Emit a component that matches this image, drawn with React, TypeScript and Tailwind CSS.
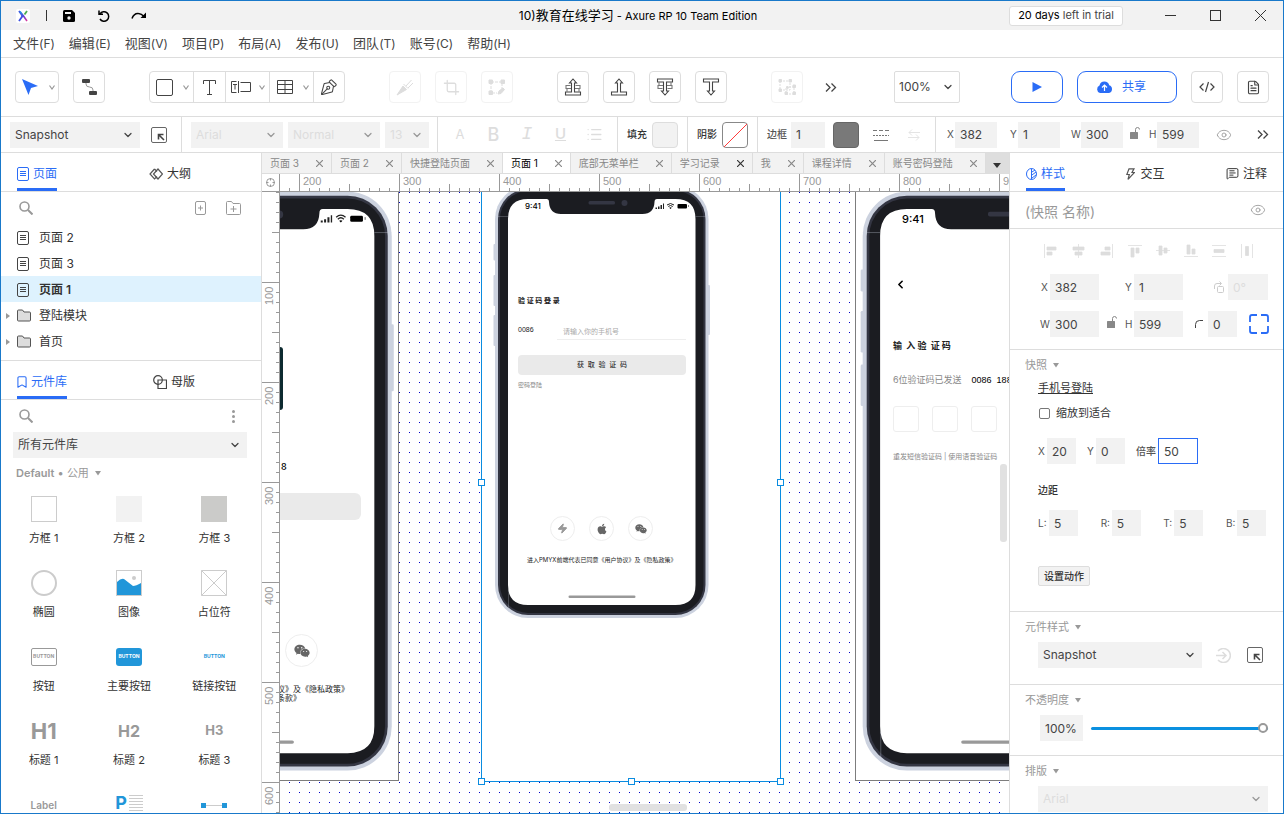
import React, { useState } from 'react';
import { Bookmark, ChevronDown, ChevronLeft, Crop, Eye, FileText, List, MessageSquareText, PenTool, Zap } from 'lucide-react';
import { FaApple, FaWeixin } from 'react-icons/fa';

const menus = [
  { name: '文件', shortcut: '(F)' },
  { name: '编辑', shortcut: '(E)' },
  { name: '视图', shortcut: '(V)' },
  { name: '项目', shortcut: '(P)' },
  { name: '布局', shortcut: '(A)' },
  { name: '发布', shortcut: '(U)' },
  { name: '团队', shortcut: '(T)' },
  { name: '账号', shortcut: '(C)' },
  { name: '帮助', shortcut: '(H)' },
];

const docTabs = ['页面 3', '页面 2', '快捷登陆页面', '页面 1', '底部无菜单栏', '学习记录', '我', '课程详情', '账号密码登陆'];

const pages = [
  { name: '页面 2', folder: false },
  { name: '页面 3', folder: false },
  { name: '页面 1', folder: false },
  { name: '登陆模块', folder: true },
  { name: '首页', folder: true },
];

/* ---------- small icons ---------- */

const PageIcon = ({ className = '' }: { className?: string }) => (
  <svg className={className} width="12" height="14" viewBox="0 0 12 14" fill="none" stroke="currentColor">
    <rect x="0.5" y="0.5" width="11" height="13" rx="1.5" />
    <path d="M3 4.5h6M3 6.5h6M3 8.5h6" />
  </svg>
);

const FolderIcon = () => (
  <svg width="14" height="13" viewBox="0 0 14 13" fill="#ddd" stroke="#555">
    <path d="M1.5 1h4l1.5 2h5.5q1 0 1 1v7q0 1-1 1h-11q-1 0-1-1v-9q0-1 1-1z" />
  </svg>
);

const Caret = ({ className = '' }: { className?: string }) => (
  <svg className={className} width="6" height="5" viewBox="0 0 6 5" fill="currentColor">
    <path d="M0 0h6l-3 4.5z" />
  </svg>
);

const SearchIcon = () => (
  <svg width="14" height="14" viewBox="0 0 14 14" fill="none" stroke="#999" strokeWidth="1.600">
    <circle cx="5.500" cy="5.500" r="4.500" />
    <path d="M9 9l4.500 4.500" strokeWidth="2" />
  </svg>
);

const MoreIcon = () => (
  <svg width="12" height="9" viewBox="0 0 12 9" fill="none" stroke="#444" strokeWidth="1.300">
    <path d="M1 0.500l4 4-4 4M6.500 0.500l4 4-4 4" />
  </svg>
);

const CornerIcon = () => (
  <svg width="16" height="16" viewBox="0 0 16 16" fill="none" stroke="#666">
    <rect x="0.5" y="0.5" width="15" height="15" rx="1.5" />
    <path d="M13 13L8 8M7.500 12.500v-5h5" stroke="#444" strokeWidth="1.600" />
  </svg>
);

const LockIcon = () => (
  <svg width="10" height="12" viewBox="0 0 10 12" fill="none">
    <rect x="0" y="5" width="8" height="7" rx="0.5" fill="#888" />
    <path d="M5.500 5V2.500q0-2 2-2t2 2" stroke="#888" />
  </svg>
);

const EyeIcon = () => <Eye className="text-[#999]" size={16} strokeWidth={1.3} />;

const CodeIcon = () => (
  <svg width="16" height="12" viewBox="0 0 16 12" fill="none" stroke="#444" strokeWidth="1.200">
    <path d="M4.500 2.500L1 6l3.500 3.500M11.500 2.500L15 6l-3.500 3.500M9.500 1l-3 10" />
  </svg>
);

const SplitIcon = () => (
  <svg width="20" height="12" viewBox="0 0 20 12" fill="none" stroke="#444">
    <path d="M5.500 0.500h-5v11h5M7.500 0v12M9.500 1.500h10v9h-10M2 3.500h4M4 3.500v5" />
  </svg>
);

const TableIcon = () => (
  <svg width="16" height="14" viewBox="0 0 16 14" fill="none" stroke="#444">
    <path d="M0.500 0.500h15v13h-15zM0.500 4.500h15M0.500 9.500h15M8 0.500v13" />
  </svg>
);

const ForwardIcon = ({ down = false, stacked = false }: { down?: boolean; stacked?: boolean }) => (
  <svg className={down ? 'rotate-180' : ''} width="18" height="18" viewBox="0 0 18 18" fill="none" stroke="#444" strokeWidth="1.100">
    {stacked && <path d="M6.500 7.500H2v3h5M11.500 7.500H16v3h-5M3 10.500v3M15 10.500v3" stroke="#777" />}
    <path d="M7.500 14V5H5.500L9 1l3.500 4h-2v9H16.500v3H1.500v-3z" fill="white" />
  </svg>
);

const NodesIcon = () => (
  <svg width="20" height="18" viewBox="0 0 20 18" fill="#ddd" stroke="#ddd">
    <path d="M3 3h10v9H3zM9 9h8v7H9z" fill="none" strokeDasharray="2 1" />
    <path d="M2 1.500h2.500V4H2zM12 1.500h2.500V4H12zM2 11h2.500v2.500H2zM16 7h2.500v2.500H16zM8 14h2.500v2.500H8zM16 14h2.500v2.500H16z" />
    <circle cx="10.500" cy="9.500" r="1" />
  </svg>
);

const alignPaths = [
  'M0.500 0v14M3 3h9v3H3zM3 8h5v3H3z',
  'M6.500 0v14M1 3h11v3H1zM3 8h7v3H3z',
  'M12.500 0v14M1 8h9v3H1zM5 3h5v3H5z',
  'M0 1.500h14M3 4h3v9H3zM8 4h3v5H8z',
  'M0 6.500h14M3 2h3v9H3zM8 4h3v5H8z',
  'M0 12.500h14M3 1h3v9H3zM8 5h3v5H8z',
  'M0 1.500h14M0 12.500h14M2 5.500h10v3H2z',
  'M1.500 0v14M12.500 0v14M5.500 2.500h3v9h-3z',
];

/* ---------- form pieces ---------- */

interface SelectProps {
  label: string;
  value: string;
  className: string;
  disabled?: boolean;
}

const Select = ({ label, value, className, disabled }: SelectProps) => (
  <div className={`relative h-[26px] bg-[#f2f2f2] ${className}`}>
    <select
      aria-label={label}
      disabled={disabled}
      className={`h-full w-full appearance-none bg-transparent px-[5px] outline-none ${disabled ? 'text-[#ddd]' : 'text-[#444]'}`}
    >
      <option>{value}</option>
    </select>
    <ChevronDown
      className={`pointer-events-none absolute top-[7px] right-1.5 ${disabled ? 'text-[#999]' : 'text-[#444]'}`}
      size={12}
      strokeWidth={2.5}
    />
  </div>
);

interface FieldProps {
  id: string;
  label: React.ReactNode;
  value: string;
  className: string;
  labelClass?: string;
  disabled?: boolean;
}

const Field = ({ id, label, value, className, labelClass = 'w-3', disabled }: FieldProps) => (
  <div className="flex items-center">
    <label htmlFor={id} className={`shrink-0 text-[10px] whitespace-nowrap text-[#555] ${labelClass}`}>
      {label}
    </label>
    <input
      id={id}
      defaultValue={value}
      disabled={disabled}
      className={`h-[26px] px-[5px] outline-none ${disabled ? 'text-[#ddd]' : 'text-[#444]'} ${className}`}
    />
  </div>
);

const SectionTitle = ({ children }: { children: React.ReactNode }) => (
  <button className="flex h-4 items-center gap-1.5 pl-[15px] text-[11px] text-[#999]">
    {children}
    <Caret />
  </button>
);

/* ---------- top bars ---------- */

const TitleBar = () => (
  <header className="grid h-[29px] shrink-0 grid-cols-[1fr_auto_1fr] items-center bg-[#f2f2f2] text-black">
    <div className="flex items-center pl-[15px]">
      <svg width="14" height="14" viewBox="0 0 14 14" fill="none">
        <defs>
          <linearGradient id="logo" x1="0" y1="0" x2="1" y2="1">
            <stop offset="0" stopColor="#1aa3e8" />
            <stop offset="0.5" stopColor="#5b3fd6" />
            <stop offset="1" stopColor="#e0359a" />
          </linearGradient>
        </defs>
        <rect width="14" height="14" rx="2" fill="white" />
        <path d="M3 2l2.500 3.500q1.500 1.500 0 3L3 12" stroke="#3f51e0" strokeWidth="1.800" />
        <path d="M11 2L8.500 5.500" stroke="#4caf50" strokeWidth="1.800" />
        <path d="M4 2.500l3.500 4.500L11 12" stroke="url(#logo)" strokeWidth="1.600" />
      </svg>
      <span className="ml-4 h-[11px] w-px bg-[#333]" />
      <button aria-label="保存" className="ml-4">
        <svg width="12" height="12" viewBox="0 0 12 12">
          <path d="M1.500 0H9l3 3v7.500q0 1.500-1.500 1.500h-9Q0 12 0 10.500v-9Q0 0 1.500 0z" />
          <path d="M2 2h6v2H2z" fill="#f2f2f2" />
          <circle cx="6" cy="8" r="1.700" fill="#f2f2f2" />
        </svg>
      </button>
      <button aria-label="撤销" className="ml-[23px]">
        <svg width="12" height="12" viewBox="0 0 12 12" fill="none" stroke="black" strokeWidth="1.500">
          <path d="M2 4a4.700 4.700 0 1 1 0 5M1 0.500V4.200h4" />
        </svg>
      </button>
      <button aria-label="重做" className="ml-[21px]">
        <svg width="16" height="9" viewBox="0 0 16 9" fill="none" stroke="black" strokeWidth="1.500">
          <path d="M1 7.500Q3 2 7.500 2.500q3 .2 5.500 3" />
          <path d="M15 1.500V7H9.500z" fill="black" stroke="none" />
        </svg>
      </button>
    </div>
    <h1 className="pr-2 text-[11px] whitespace-nowrap">
      <span className="text-[12px]">10)</span>
      <span className="text-[13px]">教育在线学习</span> - Axure RP 10 Team Edition
    </h1>
    <div className="flex items-center justify-end pr-[17px]">
      <button className="mr-[42px] h-5 w-[114px] rounded-[3px] border border-[#ddd] bg-white text-[11px] whitespace-nowrap text-[#444]">
        <span className="text-black">20 days</span> left in trial
      </button>
      <div className="flex gap-[34px]">
        <button aria-label="最小化" className="flex size-[11px] items-center">
          <span className="h-px w-full bg-[#333]" />
        </button>
        <button aria-label="最大化" className="size-[11px] border border-[#333]" />
        <button aria-label="关闭">
          <svg width="11" height="11" viewBox="0 0 11 11" stroke="#333">
            <path d="M0 0l11 11M11 0L0 11" />
          </svg>
        </button>
      </div>
    </div>
  </header>
);

const SmallChevron = () => (
  <svg width="6" height="5" viewBox="0 0 6 5" fill="none" stroke="#999" strokeWidth="1.200">
    <path d="M0.500 0.500L3 4l2.500-3.500" />
  </svg>
);

const ToolButton = ({ label, faded, children }: { label: string; faded?: boolean; children: React.ReactNode }) => (
  <button
    aria-label={label}
    className={`flex size-8 items-center justify-center rounded-[4px] border text-[#444] ${faded ? 'border-[#f2f2f2]' : 'border-[#ddd]'}`}
  >
    {children}
  </button>
);

const Toolbar = () => (
  <div className="flex h-[59px] shrink-0 items-center border-b border-[#ddd] px-3.5">
    <div className="flex gap-3.5">
      <button aria-label="选择" className="flex h-8 w-11 items-center justify-between rounded-[4px] border border-[#ddd] pr-[3px] pl-1.5">
        <svg width="16" height="16" viewBox="0 0 16 16" fill="#2a6cf6">
          <path d="M0 0l16 7-7 2-2.500 7z" />
        </svg>
        <SmallChevron />
      </button>
      <ToolButton label="连接">
        <svg width="15" height="16" viewBox="0 0 15 16" fill="none">
          <path d="M4 2v3q0 3 3.500 3T11 11v3" stroke="#999" />
          <rect width="8" height="4" rx="1" fill="#444" />
          <rect x="7" y="12" width="8" height="4" rx="1" fill="#444" />
        </svg>
      </ToolButton>
    </div>
    <div className="ml-11 flex h-8 divide-x divide-[#ddd] rounded-[4px] border border-[#ddd]">
      <button aria-label="矩形" className="flex w-11 items-center justify-between pr-1 pl-1.5">
        <svg width="17" height="17" viewBox="0 0 17 17" fill="none" stroke="#444">
          <rect x="0.500" y="0.500" width="16" height="16" rx="1.500" />
        </svg>
        <SmallChevron />
      </button>
      <button aria-label="文本" className="flex w-8 items-center justify-center">
        <svg width="13" height="15" viewBox="0 0 13 15" fill="none" stroke="#444">
          <path d="M0.500 4V0.500h12V4M6.500 0.500v14M4 14.500h5" />
        </svg>
      </button>
      <button aria-label="表单" className="flex w-11 items-center justify-between pr-1 pl-[5px]">
        <SplitIcon />
        <SmallChevron />
      </button>
      <button aria-label="表格" className="flex w-11 items-center justify-between pr-1 pl-[7px]">
        <TableIcon />
        <SmallChevron />
      </button>
      <button aria-label="钢笔" className="flex w-[30px] items-center justify-center">
        <PenTool className="-scale-y-100 text-[#444]" size={18} strokeWidth={1.4} />
      </button>
    </div>
    <div className="ml-11 flex gap-3.5">
      <ToolButton label="切割" faded>
        <svg width="18" height="18" viewBox="0 0 18 18" fill="#ddd" stroke="#ddd">
          <path d="M1 17l6-9 3.500 3.500zM7.500 6l4.500 4.500M10 8l5.500-6M12 10l5-5" />
        </svg>
      </ToolButton>
      <ToolButton label="裁剪" faded>
        <Crop className="text-[#ddd]" size={17} strokeWidth={1.8} />
      </ToolButton>
      <ToolButton label="编辑点" faded>
        <svg width="18" height="17" viewBox="0 0 18 17" fill="#ddd" stroke="#ddd">
          <path d="M3 3h11v8M3 3v11h6" fill="none" strokeDasharray="3 1" />
          <path d="M1 1h3.500v3.500H1zM13 1h3.500v3.500H13zM1 12h3.500v3.500H1zM10 15l1-3 4-3 1.500 1.500-3.500 4z" />
        </svg>
      </ToolButton>
    </div>
    <div className="ml-11 flex gap-3.5">
      <ToolButton label="置于顶层">
        <ForwardIcon stacked />
      </ToolButton>
      <ToolButton label="上移一层">
        <ForwardIcon />
      </ToolButton>
      <ToolButton label="置于底层">
        <ForwardIcon down stacked />
      </ToolButton>
      <ToolButton label="下移一层">
        <ForwardIcon down />
      </ToolButton>
    </div>
    <div className="ml-11 flex items-center gap-[22px]">
      <ToolButton label="组合" faded>
        <NodesIcon />
      </ToolButton>
      <button aria-label="更多">
        <MoreIcon />
      </button>
    </div>
    <div className="ml-auto flex items-center gap-3.5">
      <div className="relative mr-[37px] h-8 w-[66px] rounded-[2px] border border-[#ddd]">
        <select aria-label="缩放" className="h-full w-full appearance-none px-1 text-[12px] text-[#444] outline-none">
          <option>100%</option>
        </select>
        <ChevronDown className="pointer-events-none absolute top-[9px] right-[5px] text-[#444]" size={12} strokeWidth={2.5} />
      </div>
      <button aria-label="预览" className="flex h-8 w-[52px] items-center justify-center rounded-[9px] border border-[#2a6cf6]">
        <svg width="10" height="10" viewBox="0 0 10 10" fill="#2a6cf6">
          <path d="M0.500 0L10 5l-9.500 5z" />
        </svg>
      </button>
      <button className="flex h-8 w-[100px] items-center justify-center gap-[9px] rounded-[9px] border border-[#2a6cf6] pr-3 text-[#2a6cf6]">
        <svg width="17" height="12" viewBox="0 0 17 12" fill="#2a6cf6">
          <path d="M4 12a4 4 0 0 1-.5-7.500 5 5 0 0 1 9.700-.2A4 4 0 0 1 13 12z" />
          <path d="M8.500 10V4.500M6 6.500l2.500-2.500L11 6.500" stroke="white" strokeWidth="1.200" fill="none" />
        </svg>
        共享
      </button>
      <ToolButton label="代码">
        <CodeIcon />
      </ToolButton>
      <ToolButton label="说明">
        <FileText size={15} strokeWidth={1.8} />
      </ToolButton>
    </div>
  </div>
);

const PropertyBar = () => (
  <div className="flex h-9 shrink-0 divide-x divide-[#ddd] border-b border-[#ddd]">
    <div className="flex items-center gap-[11px] pr-3.5 pl-[9px]">
      <Select label="样式" value="Snapshot" className="w-[130px]" />
      <button aria-label="编辑样式">
        <CornerIcon />
      </button>
    </div>
    <div className="flex items-center gap-[5px] pr-2 pl-[9px]">
      <Select label="字体" value="Arial" className="w-[92px]" disabled />
      <Select label="字重" value="Normal" className="w-[92px]" disabled />
      <Select label="字号" value="13" className="w-11" disabled />
    </div>
    <div className="flex w-[180px] items-center justify-between px-3.5 text-[#ddd]">
      <button className="w-4 text-[13px]">A</button>
      <button className="w-4 text-[18px] font-medium">B</button>
      <button className="w-4 font-['Liberation_Mono'] text-[18px] italic">I</button>
      <button className="w-4 text-[15px] font-medium underline">U</button>
      <button aria-label="列表">
        <List size={17} strokeWidth={1.8} />
      </button>
    </div>
    <div className="flex items-center gap-[5px] pr-[9px] pl-[9px] text-[10px] font-medium">
      填充
      <button aria-label="填充颜色" className="size-[26px] rounded-[4px] border border-[#ddd] bg-[#f2f2f2]" />
    </div>
    <div className="flex items-center gap-[5px] pr-[9px] pl-[9px] text-[10px] font-medium">
      阴影
      <button aria-label="阴影颜色">
        <svg width="26" height="26" viewBox="0 0 26 26" fill="none">
          <rect x="0.500" y="0.500" width="25" height="25" rx="3.500" stroke="#888" />
          <path d="M2 25L25 2" stroke="#ff3b3b" />
        </svg>
      </button>
    </div>
    <div className="flex items-center pr-[15px] pl-[9px]">
      <Field id="border-width" label="边框" value="1" className="w-[34px] bg-[#f2f2f2]" labelClass="w-6 font-medium" />
      <button aria-label="边框颜色" className="ml-2 size-[26px] rounded-[4px] border border-[#666] bg-[#797979]" />
      <button aria-label="线型" className="ml-3.5">
        <svg width="16" height="12" viewBox="0 0 16 12" fill="none" stroke="#777">
          <path d="M0 1.500h16" strokeDasharray="4 2" />
          <path d="M0 6.500h16" strokeDasharray="2 1" />
          <path d="M1 11.500h14" />
        </svg>
      </button>
      <button aria-label="箭头" className="ml-[19px]">
        <svg width="12" height="12" viewBox="0 0 12 12" fill="none" stroke="#e4e4e4">
          <path d="M12 3.500H1M4 0.500l-3 3 3 3M0 8.500h11M8 5.500l3 3-3 3" />
        </svg>
      </button>
    </div>
    <div className="flex flex-1 items-center pr-3.5 pl-[11px]">
      <Field id="bar-x" label="X" value="382" className="w-[42px] bg-[#f2f2f2]" labelClass="w-2" />
      <div className="ml-[13px]">
        <Field id="bar-y" label="Y" value="1" className="w-[42px] bg-[#f2f2f2]" labelClass="w-2" />
      </div>
      <div className="ml-[11px]">
        <Field id="bar-w" label="W" value="300" className="w-[42px] bg-[#f2f2f2]" labelClass="w-2.5" />
      </div>
      <button aria-label="锁定比例" className="ml-[7px] pb-1">
        <LockIcon />
      </button>
      <div className="ml-[9px]">
        <Field id="bar-h" label="H" value="599" className="w-[42px] bg-[#f2f2f2]" labelClass="w-2" />
      </div>
      <button aria-label="隐藏" className="ml-[17px]">
        <EyeIcon />
      </button>
      <button aria-label="更多属性" className="ml-auto">
        <MoreIcon />
      </button>
    </div>
  </div>
);

/* ---------- left side ---------- */

const PagesPanel = () => {
  const [current, setCurrent] = useState('页面 1');

  return (
    <section className="flex h-[208px] shrink-0 flex-col border-b border-[#ddd]">
      <div className="flex h-[39px] shrink-0 border-b border-[#ddd] pl-4">
        <button className="flex items-center gap-1 border-b-[3px] border-[#2a6cf6] pt-1.5 text-[#2a6cf6]">
          <PageIcon />
          页面
        </button>
        <button className="ml-[92px] flex items-center gap-1 pt-[3px]">
          <svg width="14" height="12" viewBox="0 0 14 12" fill="none" stroke="#555" strokeWidth="1.200">
            <path d="M5.500 1L1 6l4.500 5L8 8.500M5.500 1L8 3.500M9 1L4.500 6 9 11l4.500-5z" />
          </svg>
          大纲
        </button>
      </div>
      <div className="flex h-8 items-center pr-5 pl-[18px]">
        <SearchIcon />
        <button aria-label="添加页面" className="ml-auto">
          <svg width="11" height="14" viewBox="0 0 11 14" fill="none" stroke="#999">
            <rect x="0.500" y="0.500" width="10" height="13" rx="1.500" />
            <path d="M5.500 4.500v5M3 7h5" />
          </svg>
        </button>
        <button aria-label="添加文件夹" className="ml-5">
          <svg width="15" height="14" viewBox="0 0 15 14" fill="none" stroke="#999">
            <path d="M1.500 0.500h4l1.500 2h6.500q1 0 1 1v9q0 1-1 1h-12q-1 0-1-1v-11q0-1 1-1zM7.500 5v6M4.500 8h6" />
          </svg>
        </button>
      </div>
      <ul>
        {pages.map((page) => (
          <li key={page.name}>
            <button
              onClick={() => setCurrent(page.name)}
              className={`flex h-[26px] w-full items-center pt-px ${page.name === current ? 'bg-[#def2fe] font-semibold' : ''}`}
            >
              <span className="flex w-4 items-center pl-[5px] text-[#999]">
                {page.folder && (
                  <svg width="4" height="6" viewBox="0 0 4 6" fill="currentColor">
                    <path d="M0 0v6l4-3z" />
                  </svg>
                )}
              </span>
              <span className="w-[22px] text-[#444]">{page.folder ? <FolderIcon /> : <PageIcon />}</span>
              {page.name}
            </button>
          </li>
        ))}
      </ul>
    </section>
  );
};

const libraryItems = [
  { id: 'box-1', name: '方框 1', icon: <span className="size-[26px] border border-[#ccc]" /> },
  { id: 'box-2', name: '方框 2', icon: <span className="size-[26px] bg-[#f2f2f2]" /> },
  { id: 'box-3', name: '方框 3', icon: <span className="size-[26px] bg-[#cbcbc9]" /> },
  { id: 'ellipse', name: '椭圆', icon: <span className="size-[26px] rounded-full border-2 border-[#ccc]" /> },
  {
    id: 'image',
    name: '图像',
    icon: (
      <svg width="26" height="26" viewBox="0 0 26 26">
        <rect x="0.500" y="0.500" width="25" height="25" fill="white" stroke="#ccc" />
        <path d="M1 12q4-4 7-3l9 7q3 0 8-3v12H1z" fill="#2196d9" />
        <circle cx="18" cy="8" r="2" fill="#ccc" />
      </svg>
    ),
  },
  {
    id: 'placeholder',
    name: '占位符',
    icon: (
      <svg width="26" height="26" viewBox="0 0 26 26" fill="none" stroke="#ccc">
        <path d="M0.500 0.500h25v25h-25zM0.500 0.500l25 25M25.500 0.500l-25 25" />
      </svg>
    ),
  },
  {
    id: 'button',
    name: '按钮',
    icon: (
      <span className="flex h-[18px] w-[26px] items-center justify-center rounded-[2px] border border-[#999] text-[5px] font-bold text-[#999]">
        BUTTON
      </span>
    ),
  },
  {
    id: 'primary-button',
    name: '主要按钮',
    icon: (
      <span className="flex h-[18px] w-[26px] items-center justify-center rounded-[3px] bg-[#2196d9] text-[5px] font-bold text-white">
        BUTTON
      </span>
    ),
  },
  { id: 'link-button', name: '链接按钮', icon: <span className="text-[5px] font-bold text-[#2196d9]">BUTTON</span> },
  { id: 'h1', name: '标题 1', icon: <span className="text-[22px] font-bold text-[#999]">H1</span> },
  { id: 'h2', name: '标题 2', icon: <span className="text-[16px] font-bold text-[#999]">H2</span> },
  { id: 'h3', name: '标题 3', icon: <span className="text-[13px] font-bold text-[#999]">H3</span> },
  { id: 'label', icon: <span className="text-[10px] font-semibold text-[#999]">Label</span> },
  {
    id: 'paragraph',
    icon: (
      <span className="flex items-start gap-0.5 pb-1 leading-4">
        <b className="text-[18px] text-[#2196d9]">P</b>
        <svg width="14" height="16" viewBox="0 0 14 16" stroke="#ccc">
          <path d="M0 0.500h14M0 3.500h14M0 6.500h14M0 9.500h14M0 12.500h14M0 15.500h14" />
        </svg>
      </span>
    ),
  },
  {
    id: 'line',
    icon: (
      <svg width="26" height="5" viewBox="0 0 26 5" fill="#2196d9">
        <path d="M0 2.500h26" stroke="#ccc" />
        <path d="M0 0h5v5H0zM21 0h5v5h-5z" />
      </svg>
    ),
  },
];

const LibraryPanel = () => (
  <section className="flex min-h-0 flex-1 flex-col overflow-hidden">
    <div className="flex h-[39px] shrink-0 border-b border-[#ddd] pl-4">
      <button className="flex items-center gap-0.5 border-b-[3px] border-[#2a6cf6] pt-1.5 text-[#2a6cf6]">
        <Bookmark size={14} strokeWidth={1.8} className="-ml-0.5" />
        元件库
      </button>
      <button className="ml-[86px] flex items-center gap-1 pt-[3px]">
        <svg width="14" height="14" viewBox="0 0 14 14" fill="none" stroke="#444" strokeWidth="1.200">
          <circle cx="5" cy="5" r="4.300" />
          <path d="M5 5h8.500v8.500H5z" />
        </svg>
        母版
      </button>
    </div>
    <div className="flex h-8 shrink-0 items-center justify-between pr-[26px] pl-[18px]">
      <SearchIcon />
      <button aria-label="元件库选项">
        <svg width="3" height="13" viewBox="0 0 3 13" fill="#999">
          <circle cx="1.500" cy="1.500" r="1.500" />
          <circle cx="1.500" cy="6.500" r="1.500" />
          <circle cx="1.500" cy="11.500" r="1.500" />
        </svg>
      </button>
    </div>
    <Select label="元件库" value="所有元件库" className="mr-3.5 ml-3 shrink-0" />
    <button className="mt-[7px] flex h-4 shrink-0 items-center gap-1.5 pl-[15px] text-[11px] text-[#999]">
      <span>
        <b className="font-semibold">Default</b> • 公用
      </span>
      <Caret />
    </button>
    <ul className="mt-[15px] grid shrink-0 grid-cols-3 gap-y-6 pr-1">
      {libraryItems.map((item) => (
        <li key={item.id} className="flex flex-col items-center gap-2">
          <span className="flex h-[26px] items-center justify-center">{item.icon}</span>
          {item.name && <span className="text-[11px] leading-4">{item.name}</span>}
        </li>
      ))}
    </ul>
  </section>
);

/* ---------- canvas ---------- */

const makeTicks = (count: number) => Array.from({ length: count }, (_, i) => i * 10);

const tickSize = (v: number) => (v % 100 === 0 ? 17 : v % 50 === 0 ? 7 : 3);

const HorizontalRuler = () => (
  <svg className="h-full min-w-0 flex-1 font-['Liberation_Sans']" fill="#999">
    {makeTicks(100).map((v) => (
      <g key={v}>
        <rect x={v - 181} y={17 - tickSize(v)} width="1" height={tickSize(v)} />
        {v >= 200 && v % 100 === 0 && (
          <text x={v - 177} y="11" fontSize="11">
            {v}
          </text>
        )}
      </g>
    ))}
  </svg>
);

const VerticalRuler = () => (
  <svg className="h-full w-[18px] shrink-0 border-r border-[#999] font-['Liberation_Sans']" fill="#999">
    {makeTicks(70).map((v) => (
      <g key={v}>
        <rect x={17 - tickSize(v)} y={v - 10} width={tickSize(v)} height="1" />
        {v > 0 && v % 100 === 0 && (
          <text transform={`translate(11 ${v + 13}) rotate(-90)`} fontSize="11">
            {v}
          </text>
        )}
      </g>
    ))}
  </svg>
);

// drawn in 375x812 device units, with 30 units of room for the bezel
const Phone = ({ scale, className }: { scale: number; className: string }) => (
  <svg className={`absolute ${className}`} width={435 * scale} height={872 * scale} viewBox="-30 -30 435 872">
    <g fill="#ccd2df">
      <rect x="-29" y="90" width="6" height="33" rx="2" />
      <rect x="-29" y="152" width="6" height="62" rx="2" />
      <rect x="-29" y="232" width="6" height="62" rx="2" />
      <rect x="398" y="172" width="6" height="100" rx="2" />
      <rect x="-26" y="-26" width="427" height="864" rx="66" />
    </g>
    <rect x="-20" y="-20" width="415" height="852" rx="60" fill="#343643" />
    <rect x="-16" y="-16" width="407" height="844" rx="56" fill="#1b1c21" />
    <path
      d="M40 0H77q5 0 5 6 1 24 24 24h163q23 0 24-24 0-6 5-6h37q40 0 40 40v732q0 40-40 40H40q-40 0-40-40V40Q0 0 40 0z"
      fill="white"
    />
    <path d="M-26 35H0M375 35h26M1 780v45" stroke="#ccd2df" strokeWidth="1" opacity="0.500" />
    <rect x="161" y="4" width="53" height="7" rx="3" fill="#343643" />
    <circle cx="233" cy="8" r="6" fill="#343643" />
    <g>
      <path d="M295 17h3v3h-3zM300 15h3v5h-3zM305 12h3v8h-3zM310 9h2v11h-2z" fill="#222" />
      <path d="M318 12q7-6 14 0M320.500 15q4.500-4 9 0" fill="none" stroke="#222" strokeWidth="2" />
      <path d="M322.500 17.500q2.500-2 5 0L325 20z" />
      <rect x="339" y="10" width="19" height="9" rx="2" />
      <rect x="360.500" y="12" width="1.500" height="4" fill="#666" />
    </g>
    <rect x="121" y="793" width="134" height="5" rx="2.500" fill="#999" />
  </svg>
);

const handles = [
  'left-[198px] top-[287px]',
  'left-[497px] top-[287px]',
  'left-[198px] top-[586px]',
  'left-[348px] top-[586px]',
  'left-[497px] top-[586px]',
];

const LoginSnapshot = () => (
  <>
    <div className="absolute top-0 left-[201px] h-[590px] w-[300px] border-x border-b border-[#0a8ce0] bg-white" />
    <Phone scale={0.5} className="top-[-8px] left-[213px]" />
    <span className="absolute top-2 left-[245px] text-[8px] leading-3 font-medium text-black">9:41</span>
    <h2 className="absolute top-[103px] left-[238px] text-[7px] leading-3 font-bold text-[#222]">验 证 码 登 录</h2>
    <span className="absolute top-[132px] left-[238px] font-['Liberation_Sans'] text-[7px] leading-3 text-[#222]">0086</span>
    <span className="absolute top-[134px] left-[283px] text-[7px] leading-3 text-[#aaa]">请输入你的手机号</span>
    <span className="absolute top-[147px] left-[277px] h-px w-[129px] bg-[#eee]" />
    <span className="absolute top-[163px] left-[238px] flex h-5 w-[168px] items-center justify-center rounded-[4px] bg-[#eaeaea] text-[7px] font-medium text-[#333]">
      获&nbsp; 取&nbsp; 验&nbsp; 证&nbsp; 码
    </span>
    <span className="absolute top-[187px] left-[238px] text-[6px] leading-3 text-[#888]">密码登陆</span>
    <div className="absolute top-[324px] left-[270px] flex gap-3.5">
      <span className="flex size-[25px] items-center justify-center rounded-full border border-[#eee] text-[#999]">
        <Zap size={11} fill="currentColor" />
      </span>
      <span className="flex size-[25px] items-center justify-center rounded-full border border-[#eee] text-[#666]">
        <FaApple size={12} />
      </span>
      <span className="flex size-[25px] items-center justify-center rounded-full border border-[#eee] text-[#666]">
        <FaWeixin size={12} />
      </span>
    </div>
    <p className="absolute top-[362px] left-[247px] text-[6px] leading-3 whitespace-nowrap text-[#222]">
      进入PMYX前端代表已同意《用户协议》及《隐私政策》
    </p>
    {handles.map((pos) => (
      <span key={pos} className={`absolute size-[7px] border border-[#0a8ce0] bg-white ${pos}`} />
    ))}
  </>
);

const QuickLoginSnapshot = () => (
  <>
    <div className="absolute top-0 left-0 h-[589px] w-[119px] border-r border-b border-[#7d7d7d] bg-white" />
    <Phone scale={0.67} className="top-[-3px] left-[-177px]" />
    <span className="absolute top-[155px] left-0 h-[63px] w-[3px] rounded-r-[3px] bg-[#0d2a30]" />
    <span className="absolute top-[269px] left-[1px] text-[9px] leading-3 font-medium text-black">8</span>
    <span className="absolute top-[301px] left-0 h-[27px] w-[81px] rounded-r-[6px] bg-[#eaeaea]" />
    <span className="absolute top-[442px] left-[5px] flex size-[33px] items-center justify-center rounded-full border border-[#eee] text-[#666]">
      <FaWeixin size={16} />
    </span>
    <p className="absolute top-[493px] left-[-3px] text-[8px] leading-[9px] whitespace-nowrap text-[#222]">
      议》及《隐私政策》
      <br />
      条款》
    </p>
  </>
);

const CodeSnapshot = () => (
  <>
    <div className="absolute top-0 left-[575px] h-[589px] w-[300px] border-b border-l border-[#7d7d7d] bg-white" />
    <Phone scale={0.67} className="top-[-3px] left-[580px]" />
    <span className="absolute top-[21px] left-[622px] text-[11px] leading-3 font-medium text-black">9:41</span>
    <ChevronLeft className="absolute top-[86px] left-[614px] text-black" size={13} strokeWidth={3} />
    <h2 className="absolute top-[148px] left-[613px] text-[9px] leading-3 font-bold whitespace-nowrap text-[#222]">
      输&nbsp; 入&nbsp;验&nbsp; 证&nbsp;码
    </h2>
    <p className="absolute top-[182px] left-[613px] flex gap-2.5 text-[9px] leading-3 whitespace-nowrap text-[#888]">
      6位验证码已发送
      <span className="font-['Liberation_Sans'] text-black">0086&nbsp; 188</span>
    </p>
    <div className="absolute top-[214px] left-[613px] flex gap-[13px]">
      <span className="size-[26px] rounded-[3px] border border-[#eee]" />
      <span className="size-[26px] rounded-[3px] border border-[#eee]" />
      <span className="size-[26px] rounded-[3px] border border-[#eee]" />
    </div>
    <p className="absolute top-[259px] left-[613px] text-[7px] leading-3 whitespace-nowrap text-[#888]">重发短信验证码 | 使用语音验证码</p>
  </>
);

const Canvas = () => {
  const [active, setActive] = useState('页面 1');

  return (
    <main className="flex min-w-0 flex-1 flex-col overflow-hidden">
      <div className="flex h-[21px] shrink-0 border-b border-[#ddd] bg-[#dedede] text-[10px]">
        {docTabs.map((tab) => (
          <div
            key={tab}
            className={`flex shrink-0 items-center gap-[17px] border-r border-[#ddd] px-2 ${
              tab === active ? 'bg-white text-black' : 'bg-[#f2f2f2] text-[#888]'
            }`}
          >
            <button onClick={() => setActive(tab)} className="whitespace-nowrap">
              {tab}
            </button>
            <button aria-label={`关闭 ${tab}`} className={tab === '学习记录' ? 'text-[#333]' : 'text-[#888]'}>
              <svg width="7" height="7" viewBox="0 0 7 7" stroke="currentColor" strokeWidth="1.200">
                <path d="M0 0l7 7M7 0L0 7" />
              </svg>
            </button>
          </div>
        ))}
        <button aria-label="全部标签" className="flex flex-1 items-center justify-center pt-1 text-[#333]">
          <svg width="8" height="5" viewBox="0 0 8 5" fill="currentColor">
            <path d="M0 0h8L4 5z" />
          </svg>
        </button>
      </div>
      <div className="flex h-[18px] shrink-0 border-b border-[#999]">
        <div className="flex w-[18px] items-center justify-center border-r border-[#999]">
          <svg width="9" height="9" viewBox="0 0 9 9" fill="none" stroke="#999">
            <circle cx="4.500" cy="4.500" r="4" />
            <path d="M4.500 0v2.500M4.500 6.500V9M0 4.500h2.500M6.500 4.500H9" />
          </svg>
        </div>
        <HorizontalRuler />
      </div>
      <div className="flex min-h-0 flex-1">
        <VerticalRuler />
        <div className="relative min-w-0 flex-1 overflow-hidden bg-white">
          <svg className="absolute inset-0 h-full w-full">
            <pattern id="dots" width="10" height="10" patternUnits="userSpaceOnUse">
              <rect x="9" y="0" width="1" height="1" fill="#0000cc" />
            </pattern>
            <rect width="100%" height="100%" fill="url(#dots)" />
          </svg>
          <QuickLoginSnapshot />
          <CodeSnapshot />
          <LoginSnapshot />
          <span className="absolute top-[272px] right-[2px] h-[78px] w-[7px] rounded-[3px] bg-[#e1e1e1]" />
          <span className="absolute bottom-[2px] left-[329px] h-[7px] w-[78px] rounded-[3px] bg-[#e1e1e1]" />
        </div>
      </div>
    </main>
  );
};

/* ---------- right side ---------- */

const margins = [
  { id: 'margin-l', label: 'L:' },
  { id: 'margin-r', label: 'R:' },
  { id: 'margin-t', label: 'T:' },
  { id: 'margin-b', label: 'B:' },
];

const StylePanel = () => (
  <aside className="flex w-[274px] shrink-0 flex-col overflow-hidden border-l border-[#ddd]">
    <div className="flex h-[39px] shrink-0 justify-between border-b border-[#ddd] px-4">
      <button className="flex items-center gap-1 border-b-[3px] border-[#2a6cf6] pt-1.5 text-[#2a6cf6]">
        <svg width="11" height="12" viewBox="0 0 11 12" fill="none" stroke="#2a6cf6">
          <ellipse cx="5.500" cy="6" rx="5" ry="5.500" />
          <path d="M5.500 0.500v11M6 4l3-2M6 7l4-3M6 10l4-3" />
        </svg>
        样式
      </button>
      <button className="flex items-center gap-[5px] pt-[3px]">
        <svg width="9" height="12" viewBox="0 0 9 12" fill="none" stroke="#555" strokeWidth="1.200">
          <path d="M3 0.800h5L6 4.500h2.500L2 11.300l1.300-4.800H0.800z" />
        </svg>
        交互
      </button>
      <button className="flex items-center gap-1 pt-[3px]">
        <MessageSquareText size={13} strokeWidth={1.8} />
        注释
      </button>
    </div>

    <div className="flex h-[37px] shrink-0 items-center justify-between border-b border-[#ddd] pr-[17px] pl-[15px]">
      <input aria-label="快照名称" placeholder="(快照 名称)" className="w-40 pt-0.5 text-[14px] outline-none placeholder:text-[#999]" />
      <button aria-label="隐藏元件">
        <EyeIcon />
      </button>
    </div>

    <section className="h-[121px] shrink-0 border-b border-[#ddd] pt-[15px] pl-[27px]">
      <div className="flex gap-3.5 pl-[7px]">
        {alignPaths.map((d) => (
          <button key={d} aria-label="对齐" disabled>
            <svg width="14" height="14" viewBox="0 0 14 14" fill="#ddd" stroke="#ddd" strokeWidth="0.800">
              <path d={d} />
            </svg>
          </button>
        ))}
      </div>
      <div className="mt-4 flex h-[26px] items-center">
        <Field id="pos-x" label="X" value="382" className="w-[49px] bg-[#f2f2f2]" labelClass="w-[13px] pl-1" />
        <div className="ml-[22px]">
          <Field id="pos-y" label="Y" value="1" className="w-[49px] bg-[#f2f2f2]" labelClass="w-[13px] pl-1" />
        </div>
        <div className="ml-[31px]">
          <Field
            id="rotation"
            label={
              <svg width="10" height="12" viewBox="0 0 10 12" fill="none" stroke="#ccc">
                <rect x="3.500" y="5.500" width="6" height="6" rx="1" />
                <path d="M0.500 8V5q0-2.500 2.500-2.500h4M5.500 0.500l2 2-2 2" />
              </svg>
            }
            value="0°"
            className="w-10 bg-[#f2f2f2]"
            labelClass="w-3.5"
            disabled
          />
        </div>
      </div>
      <div className="mt-[11px] flex h-[26px] items-center">
        <Field id="size-w" label="W" value="300" className="w-[49px] bg-[#f2f2f2]" labelClass="w-[13px] pl-[3px]" />
        <button aria-label="锁定宽高比" className="ml-2 w-3.5 pb-1">
          <LockIcon />
        </button>
        <Field id="size-h" label="H" value="599" className="w-[49px] bg-[#f2f2f2]" labelClass="w-[13px] pl-1" />
        <div className="ml-3">
          <Field
            id="radius"
            label={
              <svg width="8" height="8" viewBox="0 0 8 8" fill="none" stroke="#444">
                <path d="M0.500 8V4.500q0-4 4-4H8" />
              </svg>
            }
            value="0"
            className="w-[29px] bg-[#f2f2f2]"
            labelClass="w-[13px]"
          />
        </div>
        <button aria-label="适应内容" className="ml-3">
          <svg width="20" height="20" viewBox="0 0 20 20" fill="none" stroke="#2a6cf6" strokeWidth="1.800">
            <path d="M1 8V3q0-2 2-2h5M12 1h5q2 0 2 2v5M19 12v5q0 2-2 2h-5M8 19H3q-2 0-2-2v-5" />
          </svg>
        </button>
      </div>
    </section>

    <section className="h-[262px] shrink-0 border-b border-[#ddd] pt-[7px]">
      <SectionTitle>快照</SectionTitle>
      <div className="pl-7">
        <a href="#page" className="mt-[7px] block w-fit text-[11px] leading-4 underline">
          手机号登陆
        </a>
        <label className="mt-[9px] flex h-4 items-center gap-1.5 pl-px text-[11px]">
          <input type="checkbox" className="size-[11px] appearance-none rounded-[2px] border border-[#777] bg-white" />
          缩放到适合
        </label>
        <div className="mt-[17px] flex">
          <Field id="offset-x" label="X" value="20" className="w-[29px] bg-[#f2f2f2]" labelClass="w-[9px]" />
          <div className="ml-[11px]">
            <Field id="offset-y" label="Y" value="0" className="w-[29px] bg-[#f2f2f2]" labelClass="w-[9px]" />
          </div>
          <div className="ml-[11px]">
            <Field id="zoom" label="倍率" value="50" className="w-10 border border-[#2a6cf6] bg-white" labelClass="w-[22px] font-medium" />
          </div>
        </div>
        <h3 className="mt-[18px] text-[10px] leading-4 font-medium">边距</h3>
        <div className="mt-3 flex justify-between pr-[17px]">
          {margins.map((m) => (
            <Field key={m.id} id={m.id} label={m.label} value="5" className="w-[29px] bg-[#f2f2f2]" labelClass="w-[11px]" />
          ))}
        </div>
        <button className="mt-[30px] h-5 w-[52px] rounded-[2px] border border-[#ddd] bg-[#f2f2f2] text-[10px] leading-4 font-medium">
          设置动作
        </button>
      </div>
    </section>

    <section className="h-[73px] shrink-0 border-b border-[#ddd] pt-[7px]">
      <SectionTitle>元件样式</SectionTitle>
      <div className="mt-[7px] flex items-center pl-7">
        <Select label="元件样式" value="Snapshot" className="w-[164px]" />
        <button aria-label="更新样式" className="ml-3.5">
          <svg width="15" height="15" viewBox="0 0 15 15" fill="none" stroke="#ddd" strokeWidth="1.500">
            <path d="M2 3a7 7 0 1 1 0 9M0 7.500h10M6.500 4l3.500 3.500L6.500 11" />
          </svg>
        </button>
        <button aria-label="管理样式" className="ml-4">
          <CornerIcon />
        </button>
      </div>
    </section>

    <section className="h-[71px] shrink-0 border-b border-[#ddd] pt-[7px]">
      <SectionTitle>不透明度</SectionTitle>
      <div className="mt-[7px] flex items-center gap-2 pr-[15px] pl-[30px]">
        <input aria-label="不透明度值" defaultValue="100%" className="h-[26px] w-[43px] bg-[#f2f2f2] px-[5px] text-[#444] outline-none" />
        <input
          type="range"
          aria-label="不透明度"
          defaultValue={100}
          className="h-[3px] min-w-0 flex-1 appearance-none rounded-full bg-[#0a90e0] [&::-webkit-slider-thumb]:size-2.5 [&::-webkit-slider-thumb]:appearance-none [&::-webkit-slider-thumb]:rounded-full [&::-webkit-slider-thumb]:border-2 [&::-webkit-slider-thumb]:border-[#999] [&::-webkit-slider-thumb]:bg-white"
        />
      </div>
    </section>

    <section className="shrink-0 pt-[7px]">
      <SectionTitle>排版</SectionTitle>
      <div className="mt-[7px] pr-[15px] pl-7">
        <Select label="排版字体" value="Arial" className="w-full" disabled />
      </div>
    </section>
  </aside>
);

const App = () => (
  <div className="flex h-screen flex-col overflow-hidden border border-[#1979ca] bg-white font-['Inter','Noto_Sans_CJK_SC',sans-serif] text-[12px] text-[#333]">
    <TitleBar />
    <nav className="flex h-7 shrink-0 items-center gap-3.5 border-b border-[#ddd] pl-3">
      {menus.map((menu) => (
        <button key={menu.name} className="whitespace-nowrap text-[#444]">
          <span className="text-[13px]">{menu.name}</span>
          {menu.shortcut}
        </button>
      ))}
    </nav>
    <Toolbar />
    <PropertyBar />
    <div className="flex min-h-0 flex-1">
      <aside className="flex w-[261px] shrink-0 flex-col border-r border-[#ddd]">
        <PagesPanel />
        <LibraryPanel />
      </aside>
      <Canvas />
      <StylePanel />
    </div>
  </div>
);

export default App;
